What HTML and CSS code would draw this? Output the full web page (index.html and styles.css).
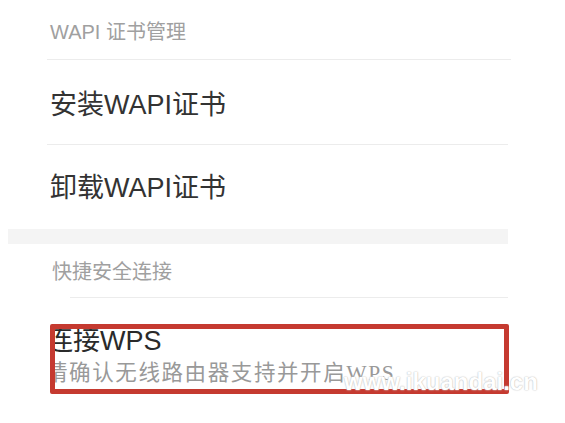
FILE: index.html
```html
<!DOCTYPE html>
<html lang="zh-CN">
<head>
<meta charset="utf-8">
<link rel="stylesheet" href="styles.css">
</head>
<body>
<div class="page">
  <div class="group-title first">WAPI 证书管理</div>
  <div class="item item-bordered">安装WAPI证书</div>
  <div class="item">卸载WAPI证书</div>
  <div class="band"></div>
  <div class="group-title second">快捷安全连接</div>
  <div class="divider"></div>
  <div class="wps-area">
    <div class="wps-row">
      <div class="wps-title">连接WPS</div>
      <div class="wps-sub">请确认无线路由器支持并开启WPS</div>
    </div>
    <div class="highlight"></div>
    <div class="watermark">www.ikuandai.cn</div>
  </div>
</div>
</body>
</html>
```
FILE: styles.css
```css
html, body {
  margin: 0;
  padding: 0;
  background: #ffffff;
}
.page {
  width: 565px;
  height: 423px;
  overflow: hidden;
  font-family: "Liberation Sans", "Noto Sans CJK SC", sans-serif;
}
.group-title {
  color: #a0a0a0;
  font-size: 20px;
  line-height: 24px;
  padding-left: 50px;
}
.group-title.first {
  padding-top: 20px;
  height: 39px;
  margin-left: 47px;
  padding-left: 3px;
  width: 461px;
  border-bottom: 1px solid #ececec;
}
.group-title.second {
  padding-left: 52px;
  padding-top: 16px;
  height: 37px;
}
.item {
  color: #333333;
  font-size: 27px;
  line-height: 30px;
  height: 84px;
  box-sizing: border-box;
  padding-top: 28px;
  padding-left: 50px;
}
.item-bordered {
  margin-left: 47px;
  padding-left: 3px;
  width: 461px;
  height: 85px;
  padding-top: 30px;
  border-bottom: 1px solid #ececec;
}
.band {
  margin-left: 8px;
  width: 500px;
  height: 15px;
  background: #f4f4f4;
}
.divider {
  margin-left: 70px;
  width: 438px;
  height: 1px;
  background: #ececec;
}
.wps-area {
  position: relative;
  margin-left: 50px;
  padding-top: 28px;
}
.wps-row {
  overflow: hidden;
  width: 459px;
  padding-bottom: 4px;
}
.wps-title {
  color: #2a2a2a;
  font-size: 27px;
  line-height: 30px;
  margin-left: -4px;
}
.wps-sub {
  color: #999999;
  font-family: "Liberation Serif", "Noto Sans CJK SC", serif;
  font-size: 21.5px;
  letter-spacing: 1.6px;
  line-height: 26px;
  margin-top: 4px;
  margin-left: -4px;
  white-space: nowrap;
}
.highlight {
  position: absolute;
  left: 0;
  top: 26px;
  width: 449px;
  height: 60px;
  border: 5px solid #c53a30;
  border-radius: 2px;
}
.watermark {
  position: absolute;
  left: 294px;
  top: 70px;
  font-family: "Liberation Sans", sans-serif;
  font-weight: bold;
  font-size: 24px;
  line-height: 28px;
  color: #ffffff;
  text-shadow: 0 0 1px #b8b8b8, 0 0 2px #d4d4d4;
}
```
